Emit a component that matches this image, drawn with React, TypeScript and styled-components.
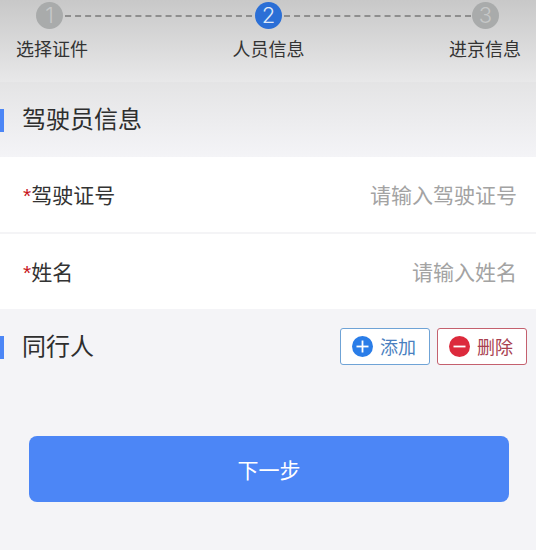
import React from "react"
import styled, { createGlobalStyle } from "styled-components"

const GlobalStyle = createGlobalStyle`
  html, body {
    margin: 0;
    padding: 0;
    background: #f4f4f7;
  }
  body {
    font-family: "Liberation Sans", "Noto Sans CJK SC", sans-serif;
  }
`

const Page = styled.div`
  width: 536px;
  height: 550px;
  overflow: hidden;
  background: #f4f4f7;
`

const Stepper = styled.div`
  height: 82px;
  box-sizing: border-box;
  padding-top: 2px;
  background: linear-gradient(#c8c8c8, #e8e8e9);
`

const Track = styled.div`
  display: flex;
  align-items: center;
  padding: 0 37px 0 36px;
`

const Circle = styled.div<{ $active?: boolean }>`
  width: 27px;
  height: 27px;
  flex: none;
  margin-left: ${(p) => (p.$active ? 2 : 0)}px;
  border-radius: 50%;
  background: ${(p) => (p.$active ? "#2b6fd6" : "#a9abab")};
  color: ${(p) => (p.$active ? "#dfe9f9" : "#c6c8c8")};
  font-family: "Inter", "Liberation Sans", sans-serif;
  font-weight: 300;
  font-size: 22px;
  line-height: 27px;
  text-align: center;
`

const Connector = styled.div`
  flex: 1;
  height: 0;
  margin: 0 1px 0 2px;
  border-top: 2px dashed #8e8e8e;
`

const Labels = styled.div`
  display: flex;
  justify-content: space-between;
  margin-top: 9px;
  padding: 0 15px 0 16px;
`

const StepLabel = styled.div`
  font-size: 18px;
  line-height: 24px;
  color: #333;
  white-space: nowrap;
`

const DriverHeading = styled.div`
  height: 75px;
  box-sizing: border-box;
  padding-top: 1px;
  background: linear-gradient(#e4e4e5, #f4f4f7);
  display: flex;
  align-items: center;
`

const PartyHeading = styled.div`
  height: 76px;
  display: flex;
  align-items: center;
  padding-right: 9px;
`

const Bar = styled.div`
  width: 4px;
  height: 23px;
  background: #4c86f6;
  margin-right: 18px;
`

const SectionTitle = styled.div`
  font-size: 24px;
  line-height: 30px;
  color: #2e2e2e;
  flex: 1;
`

const Form = styled.div`
  background: #fff;
`

const Row = styled.div<{ $divider?: boolean }>`
  height: ${(p) => (p.$divider ? 77 : 75)}px;
  box-sizing: border-box;
  padding: 0 19px 2px 23px;
  display: flex;
  align-items: center;
  justify-content: space-between;
  border-bottom: ${(p) => (p.$divider ? "2px solid #f4f4f6" : "none")};
`

const FieldLabel = styled.div`
  font-size: 21px;
  color: #333;
`

const Star = styled.span`
  color: #c8141c;
`

const Placeholder = styled.div`
  font-size: 21px;
  color: #a3a3a3;
`

const ActionButton = styled.div<{ $color: string; $text: string }>`
  width: 90px;
  height: 37px;
  box-sizing: border-box;
  padding-left: 11px;
  border: 1px solid ${(p) => p.$color};
  border-radius: 3px;
  background: #fff;
  color: ${(p) => p.$text};
  font-size: 18px;
  display: flex;
  align-items: center;
  gap: 7px;
  margin: 0 0 2px 7px;
`

const NextButton = styled.div`
  width: 480px;
  height: 66px;
  margin: 51px 0 0 29px;
  border-radius: 8px;
  background: #4c86f6;
  color: #fff;
  font-size: 21px;
  display: flex;
  align-items: center;
  justify-content: center;
`

const RoundIcon = ({ fill, plus }: { fill: string; plus?: boolean }) => (
  <svg width="21" height="21" viewBox="0 0 21 21">
    <circle cx="10.5" cy="10.5" r="10.5" fill={fill} />
    <rect x="4.5" y="9.6" width="12" height="1.8" fill="#fff" />
    {plus && <rect x="9.6" y="4.5" width="1.8" height="12" fill="#fff" />}
  </svg>
)

const App = () => {
  return (
    <Page>
      <GlobalStyle />
      <Stepper>
        <Track>
          <Circle>1</Circle>
          <Connector />
          <Circle $active>2</Circle>
          <Connector />
          <Circle>3</Circle>
        </Track>
        <Labels>
          <StepLabel>选择证件</StepLabel>
          <StepLabel>人员信息</StepLabel>
          <StepLabel>进京信息</StepLabel>
        </Labels>
      </Stepper>
      <DriverHeading>
        <Bar />
        <SectionTitle>驾驶员信息</SectionTitle>
      </DriverHeading>
      <Form>
        <Row $divider>
          <FieldLabel>
            <Star>*</Star>驾驶证号
          </FieldLabel>
          <Placeholder>请输入驾驶证号</Placeholder>
        </Row>
        <Row>
          <FieldLabel>
            <Star>*</Star>姓名
          </FieldLabel>
          <Placeholder>请输入姓名</Placeholder>
        </Row>
      </Form>
      <PartyHeading>
        <Bar />
        <SectionTitle>同行人</SectionTitle>
        <ActionButton $color="#6fa3d6" $text="#4a7fc0">
          <RoundIcon fill="#2a7de8" plus />
          添加
        </ActionButton>
        <ActionButton $color="#c4606e" $text="#a8404f">
          <RoundIcon fill="#dc2a3c" />
          删除
        </ActionButton>
      </PartyHeading>
      <NextButton>下一步</NextButton>
    </Page>
  )
}

export default App
